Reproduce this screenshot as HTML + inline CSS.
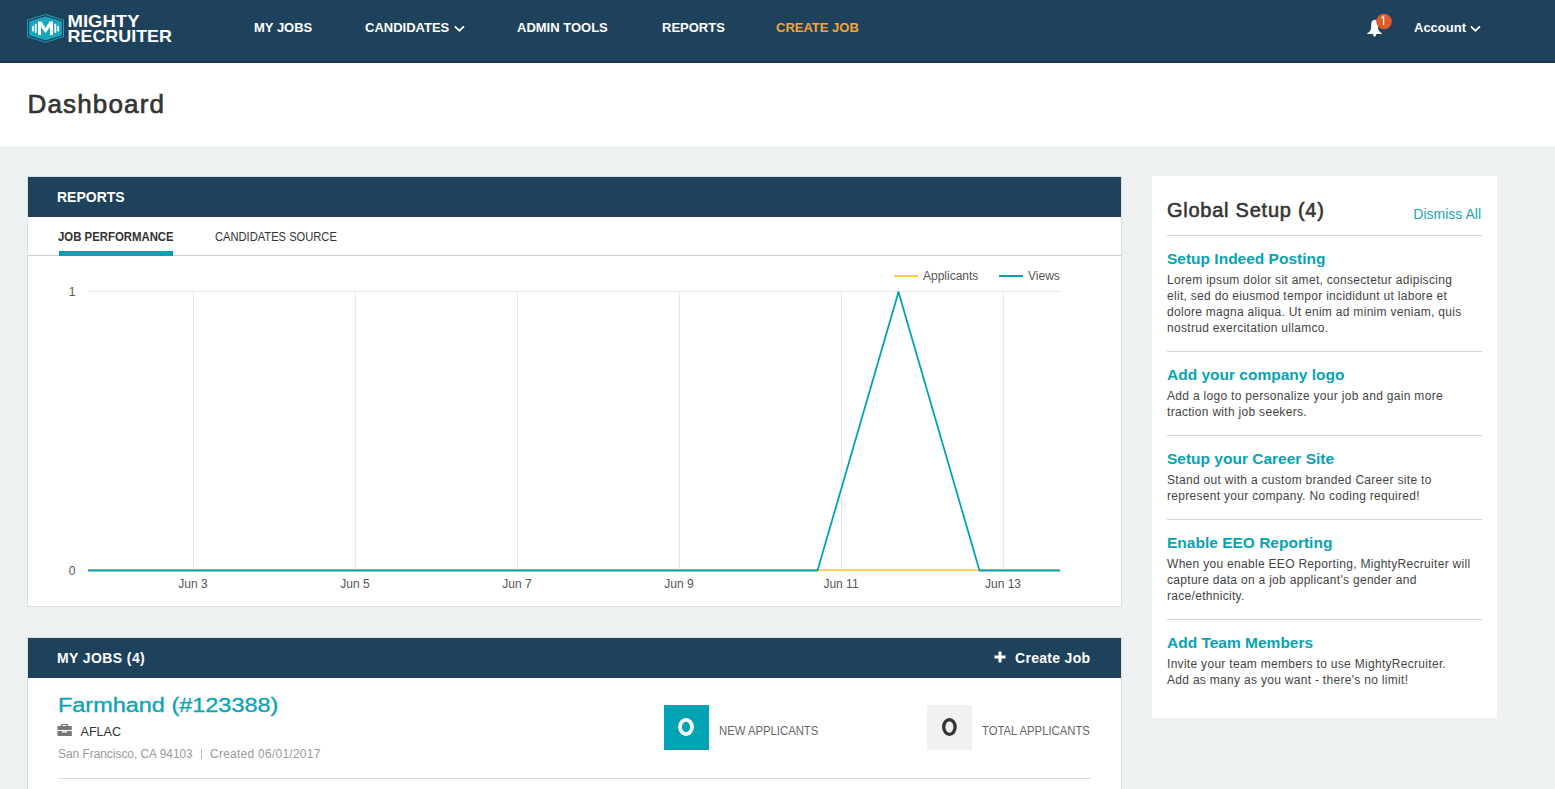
<!DOCTYPE html>
<html><head><meta charset="utf-8">
<style>
*{box-sizing:border-box;margin:0;padding:0}
html,body{width:1555px;height:789px;overflow:hidden;background:#edf1f2;font-family:"Liberation Sans",sans-serif;color:#333}
.abs{position:absolute;white-space:nowrap}
#top{position:absolute;left:0;top:0;width:1555px;height:63px;background:#1e425b;border-bottom:1px solid #173349}
.nav{position:absolute;top:20px;font-size:13px;font-weight:bold;color:#fff;white-space:nowrap;line-height:15px}
#band{position:absolute;left:0;top:63px;width:1555px;height:83px;background:#fff}
#dash{position:absolute;left:27.5px;top:26px;font-size:26px;font-weight:normal;-webkit-text-stroke:0.65px #333;color:#333;line-height:30px;letter-spacing:1.15px}
.card{position:absolute;background:#fff;border:1px solid #dcdfe0}
.chead{position:absolute;left:0;top:0;right:0;height:40px;background:#1e425b;color:#fff;font-weight:bold;font-size:14px}
.gs{position:absolute;left:1152px;top:176px;width:345px;height:542px;background:#fff}
.gs h2{position:absolute;left:15px;top:22.4px;font-size:20px;font-weight:normal;-webkit-text-stroke:0.55px #333;letter-spacing:0.75px;color:#333;line-height:24px;white-space:nowrap}
.gs .dis{position:absolute;right:16px;top:30px;font-size:14px;color:#1aa5b6;line-height:16px}
.gs .hr{position:absolute;left:15px;width:315px;height:1px;background:#d4d4d4}
.gs .t{position:absolute;left:15px;font-size:15.5px;font-weight:bold;color:#07a3b3;white-space:nowrap;line-height:18px}
.gs .p{position:absolute;left:15px;font-size:12px;letter-spacing:0.3px;color:#444;line-height:16px;white-space:nowrap}
.tab{position:absolute;top:53px;font-size:12px;line-height:14px;white-space:nowrap;color:#333}
.box{position:absolute;width:45px;height:45px;text-align:center;font-weight:bold;font-size:24px;line-height:45px}
.lbl{position:absolute;font-size:13px;color:#666;white-space:nowrap;line-height:14px;transform:scaleX(0.87);transform-origin:0 0}
</style></head><body>
<div id="top">
  <svg class="abs" style="left:0;top:0" width="200" height="63" viewBox="0 0 200 63">
    <polygon points="45.5,14 64,19.8 64,37 45.5,42.8 27,37 27,19.8" fill="#1aa0b5"/>
    <polygon points="45.5,15.7 62.4,21 62.4,35.8 45.5,41.1 28.6,35.8 28.6,21" fill="#1ba7bb" stroke="#16365a" stroke-width="1.1"/>
    <path d="M38,35 V21.5 H41.5 L45.5,28 L49.5,21.5 H53 V35 H50 V27 L45.5,33 L41,27 V35 Z" fill="#fff"/>
    <rect x="32.2" y="25.8" width="1.6" height="5.6" fill="#fff"/>
    <rect x="34.8" y="23.8" width="1.8" height="9" fill="#fff"/>
    <rect x="54.4" y="23.8" width="1.8" height="9" fill="#fff"/>
    <rect x="57.2" y="25.8" width="1.6" height="5.6" fill="#fff"/>
    <text x="67.5" y="27.4" font-family="Liberation Sans" font-weight="bold" font-size="17" fill="#fff" textLength="72" lengthAdjust="spacingAndGlyphs">MIGHTY</text>
    <text x="67.5" y="42.4" font-family="Liberation Sans" font-weight="bold" font-size="17" fill="#fff" textLength="104.5" lengthAdjust="spacingAndGlyphs">RECRUITER</text>
  </svg>
  <div class="nav" style="left:254px">MY JOBS</div>
  <div class="nav" style="left:365px">CANDIDATES</div>
  <svg class="abs" style="left:453px;top:24px" width="13" height="10" viewBox="0 0 13 10"><path d="M1.8,2.3 L6.4,6.7 L11,2.3" fill="none" stroke="#fff" stroke-width="1.7"/></svg>
  <div class="nav" style="left:517px">ADMIN TOOLS</div>
  <div class="nav" style="left:662px">REPORTS</div>
  <div class="nav" style="left:776px;color:#f5a53b">CREATE JOB</div>
  <svg class="abs" style="left:1362px;top:11px" width="32" height="28" viewBox="0 0 32 28">
    <path d="M12.6,8.8 C10.2,8.8 9.2,11 9.2,13.5 L9.2,17 C9.2,19.5 6.5,21.6 4.8,23 L20.4,23 C18.7,21.6 16,19.5 16,17 L16,13.5 C16,11 15,8.8 12.6,8.8 Z" fill="#fff"/>
    <circle cx="12.6" cy="23.9" r="1.5" fill="#fff"/>
    <circle cx="22" cy="10.5" r="7.8" fill="#e05a2a"/>
    <path d="M19.5,7.2 L21.6,5.5 V14" fill="none" stroke="#fff" stroke-width="1.2"/>
  </svg>
  <div class="nav" style="left:1414px;font-size:13px">Account</div>
  <svg class="abs" style="left:1469px;top:24px" width="13" height="10" viewBox="0 0 13 10"><path d="M1.8,2.3 L6.4,6.7 L11,2.3" fill="none" stroke="#fff" stroke-width="1.7"/></svg>
</div>
<div id="band"><div id="dash">Dashboard</div></div>

<div class="card" style="left:27px;top:176px;width:1095px;height:431px">
  <div class="chead"><div class="abs" style="left:29px;top:12px;line-height:16px">REPORTS</div></div>
  <div class="tab" style="left:30px;font-weight:bold;font-size:12.3px;transform:scaleX(0.925);transform-origin:0 0">JOB PERFORMANCE</div>
  <div class="tab" style="left:187px;font-size:12.4px;transform:scaleX(0.9);transform-origin:0 0">CANDIDATES SOURCE</div>
  <div class="abs" style="left:0;top:78px;width:1093px;height:1px;background:#cfcfcf"></div>
  <div class="abs" style="left:31px;top:74px;width:114px;height:5px;background:#00a3b4"></div>
</div>

<div class="card" style="left:27px;top:637px;width:1095px;height:200px">
  <div class="chead">
    <div class="abs" style="left:29px;top:12px;line-height:16px;letter-spacing:0.4px">MY JOBS (4)</div>
    <svg class="abs" style="left:966px;top:13px" width="12" height="12" viewBox="0 0 12 12"><path d="M4.5,0.5 H7.5 V4.5 H11.5 V7.5 H7.5 V11.5 H4.5 V7.5 H0.5 V4.5 H4.5 Z" fill="#fff"/></svg>
    <div class="abs" style="left:987px;top:12px;line-height:16px;letter-spacing:0.3px">Create Job</div>
  </div>
  <div class="abs" style="left:30px;top:55px;font-size:19.6px;line-height:24px;color:#0ca3b3;-webkit-text-stroke:0.3px #0ca3b3;transform:scaleX(1.197);transform-origin:0 0">Farmhand (#123388)</div>
  <svg class="abs" style="left:29px;top:86px" width="16" height="13" viewBox="0 0 16 13"><path fill="#777" fill-rule="evenodd" d="M4.1,0 H11 V2 H14.8 V6 H0.5 V2 H4.1 Z M5.5,1 V2 H9.6 V1 Z"/><path fill="#777" fill-rule="evenodd" d="M0.5,7 H14.8 V12 H0.5 Z M5.3,7 H9.8 V8.8 H5.3 Z"/><rect x="6.3" y="7.6" width="2.5" height="0.8" fill="#888"/></svg>
  <div class="abs" style="left:52.5px;top:87px;font-size:12.6px;line-height:15px;color:#333">AFLAC</div>
  <div class="abs" style="left:29.5px;top:109px;font-size:12px;line-height:14px;color:#999;transform:scaleX(0.99);transform-origin:0 0">San Francisco, CA 94103</div><div class="abs" style="left:173px;top:111px;width:1px;height:10px;background:#b8b8b8"></div><div class="abs" style="left:182px;top:109px;font-size:12px;line-height:14px;color:#999;letter-spacing:0.25px">Created 06/01/2017</div>
  <div class="abs" style="left:30px;top:140px;width:1033px;height:1px;background:#ddd"></div>
  <div class="box" style="left:636px;top:67px;background:#00a3b4"><svg width="45" height="45" style="position:absolute;left:0;top:0"><ellipse cx="22" cy="22" rx="6" ry="7.1" fill="none" stroke="#fff" stroke-width="3.7"/></svg></div>
  <div class="lbl" style="left:691px;top:86px">NEW APPLICANTS</div>
  <div class="box" style="left:899px;top:67px;background:#f1f1f1"><svg width="45" height="45" style="position:absolute;left:0;top:0"><ellipse cx="22.4" cy="22" rx="5.7" ry="7.3" fill="none" stroke="#333" stroke-width="3.3"/></svg></div>
  <div class="lbl" style="left:954px;top:86px">TOTAL APPLICANTS</div>
</div>

<svg class="abs" style="left:0;top:0" width="1555" height="789" viewBox="0 0 1555 789">
  <g stroke="#e8e8e8" stroke-width="1">
    <line x1="88" y1="291.5" x2="1060" y2="291.5"/>
    <line x1="193.5" y1="291" x2="193.5" y2="570"/>
    <line x1="355.5" y1="291" x2="355.5" y2="570"/>
    <line x1="517.5" y1="291" x2="517.5" y2="570"/>
    <line x1="679.5" y1="291" x2="679.5" y2="570"/>
    <line x1="841.5" y1="291" x2="841.5" y2="570"/>
    <line x1="1003.5" y1="291" x2="1003.5" y2="570"/>
  </g>
  <line x1="88" y1="570.2" x2="1060" y2="570.2" stroke="#ffc94c" stroke-width="1.7"/>
  <polyline points="88,570.5 817.5,570.5 898.5,292 979.5,570.5 1060,570.5" fill="none" stroke="#03a3b4" stroke-width="1.8" stroke-linejoin="round"/>
  <g font-family="Liberation Sans" font-size="12" fill="#555">
    <text x="72" y="296" text-anchor="middle">1</text>
    <text x="72" y="575" text-anchor="middle">0</text>
    <text x="193" y="588" text-anchor="middle">Jun 3</text>
    <text x="355" y="588" text-anchor="middle">Jun 5</text>
    <text x="517" y="588" text-anchor="middle">Jun 7</text>
    <text x="679" y="588" text-anchor="middle">Jun 9</text>
    <text x="841" y="588" text-anchor="middle">Jun 11</text>
    <text x="1003" y="588" text-anchor="middle">Jun 13</text>
    <text x="923" y="280">Applicants</text>
    <text x="1028" y="280">Views</text>
  </g>
  <line x1="894" y1="276" x2="918" y2="276" stroke="#ffc94c" stroke-width="2"/>
  <line x1="999" y1="276" x2="1023" y2="276" stroke="#00a1b3" stroke-width="2"/>
</svg>

<div class="gs">
  <h2>Global Setup (4)</h2>
  <div class="dis">Dismiss All</div>
  <div class="hr" style="top:59px"></div>
  <div class="t" style="top:74px">Setup Indeed Posting</div>
  <div class="p" style="top:96px">Lorem ipsum dolor sit amet, consectetur adipiscing<br>elit, sed do eiusmod tempor incididunt ut labore et<br>dolore magna aliqua. Ut enim ad minim veniam, quis<br>nostrud exercitation ullamco.</div>
  <div class="hr" style="top:175px"></div>
  <div class="t" style="top:190px">Add your company logo</div>
  <div class="p" style="top:212px">Add a logo to personalize your job and gain more<br>traction with job seekers.</div>
  <div class="hr" style="top:259px"></div>
  <div class="t" style="top:274px">Setup your Career Site</div>
  <div class="p" style="top:296px">Stand out with a custom branded Career site to<br>represent your company. No coding required!</div>
  <div class="hr" style="top:343px"></div>
  <div class="t" style="top:358px">Enable EEO Reporting</div>
  <div class="p" style="top:380px">When you enable EEO Reporting, MightyRecruiter will<br>capture data on a job applicant's gender and<br>race/ethnicity.</div>
  <div class="hr" style="top:443px"></div>
  <div class="t" style="top:458px">Add Team Members</div>
  <div class="p" style="top:480px">Invite your team members to use MightyRecruiter.<br>Add as many as you want - there's no limit!</div>
</div>
</body></html>
